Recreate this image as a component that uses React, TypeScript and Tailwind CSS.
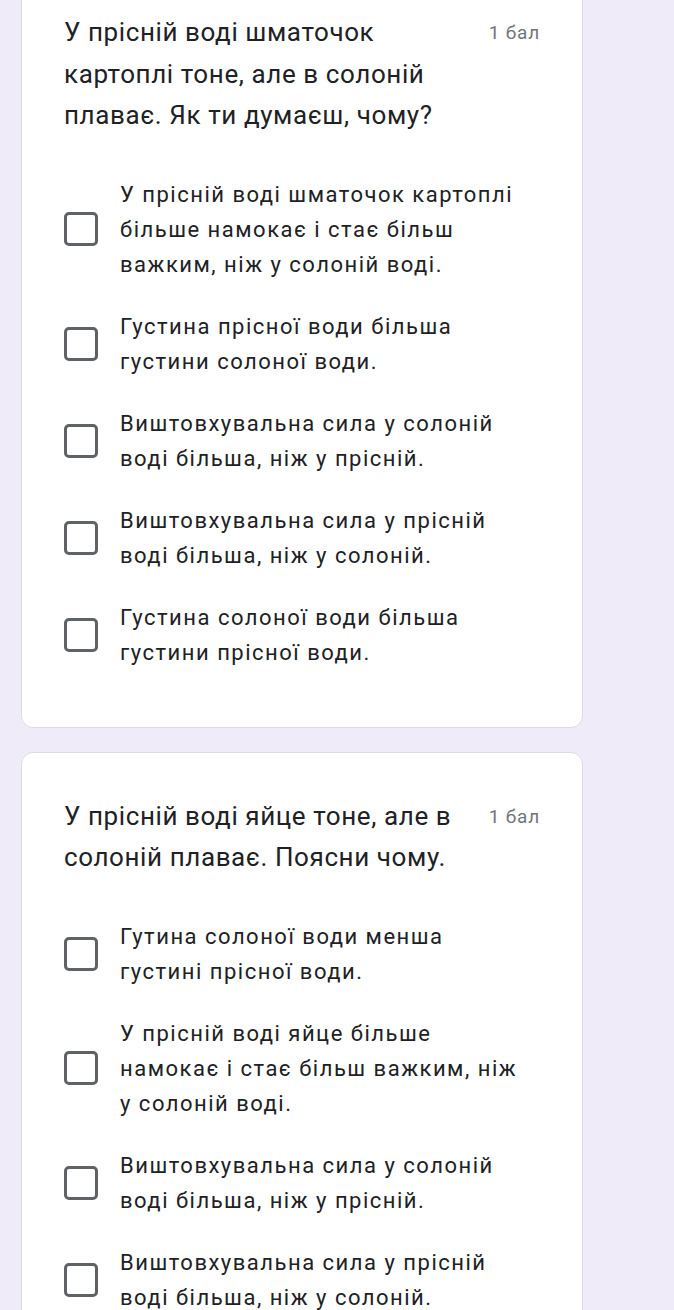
import React from "react";

type Q = { title: string; options: string[] };

const questions: Q[] = [
  {
    title: "У прісній воді шматочок картоплі тоне, але в солоній плаває. Як ти думаєш, чому?",
    options: [
      "У прісній воді шматочок картоплі більше намокає і стає більш важким, ніж у солоній воді.",
      "Густина прісної води більша густини солоної води.",
      "Виштовхувальна сила у солоній воді більша, ніж у прісній.",
      "Виштовхувальна сила у прісній воді більша, ніж у солоній.",
      "Густина солоної води більша густини прісної води.",
    ],
  },
  {
    title: "У прісній воді яйце тоне, але в солоній плаває. Поясни чому.",
    options: [
      "Гутина солоної води менша густині прісної води.",
      "У прісній воді яйце більше намокає і стає більш важким, ніж у солоній воді.",
      "Виштовхувальна сила у солоній воді більша, ніж у прісній.",
      "Виштовхувальна сила у прісній воді більша, ніж у солоній.",
    ],
  },
];

function Card({ q, first }: { q: Q; first?: boolean }) {
  return (
    <div
      className={
        "w-[562px] bg-white border border-[#dadce0] rounded-[12px] px-[42px] pt-[43px] pb-[57px] " +
        (first ? "-mt-[32px]" : "")
      }
    >
      <div className="flex items-start">
        <div className="flex-1 text-[26px] leading-[41.5px] tracking-[0.6px] text-[#202124]">{q.title}</div>
        <div className="ml-[20px] text-[19px] leading-[41.5px] tracking-[0.8px] text-[#70757a] whitespace-nowrap">1 бал</div>
      </div>
      <div className="mt-[40px] flex flex-col gap-[27px]">
        {q.options.map((o, i) => (
          <div key={i} className="flex items-center">
            <div className="w-[34px] h-[34px] shrink-0 border-[3px] border-[#5f6368] rounded-[5px]" />
            <div className="ml-[22px] w-[403px] text-[22px] leading-[35px] tracking-[1.5px] text-[#202124]">{o}</div>
          </div>
        ))}
      </div>
    </div>
  );
}

export default function App() {
  return (
    <div
      className="w-[674px] h-[1310px] overflow-hidden bg-[#f0ebf8] pl-[21px]"
      style={{ fontFamily: "Roboto, 'Noto Sans', sans-serif" }}
    >
      <div className="flex flex-col gap-[24px]">
        <Card q={questions[0]} first />
        <Card q={questions[1]} />
      </div>
    </div>
  );
}
